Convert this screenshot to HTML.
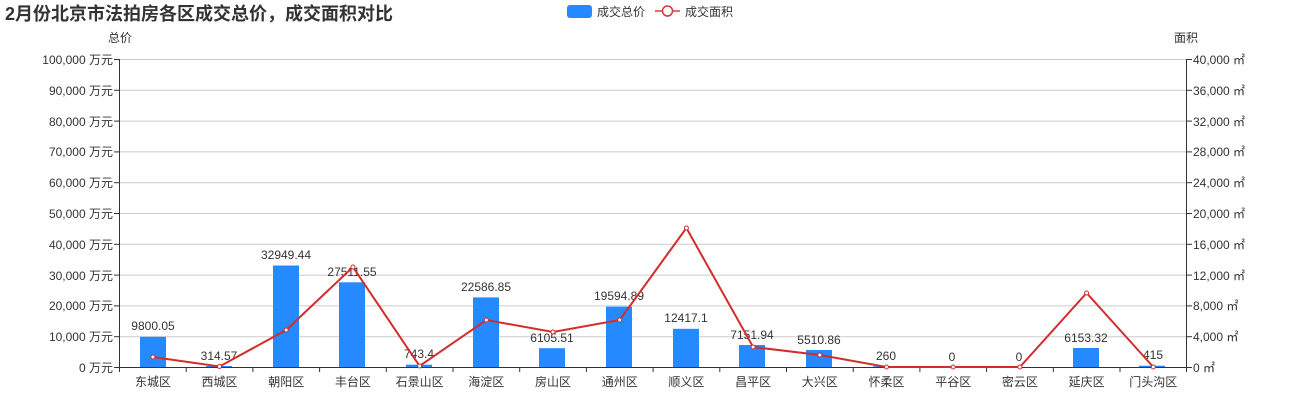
<!DOCTYPE html>
<html><head><meta charset="utf-8"><style>
html,body{margin:0;padding:0;background:#fff;}
svg{display:block;font-family:"Liberation Sans","Noto Sans CJK SC",sans-serif;}
</style></head><body>
<svg width="1300" height="400" viewBox="0 0 1300 400">
<text x="5" y="20" font-size="18" font-weight="bold" fill="#333">2月份北京市法拍房各区成交总价，成交面积对比</text>
<!-- legend -->
<rect x="567" y="5" width="25" height="13" rx="3" fill="#2589ff"/>
<text x="597" y="16" font-size="12" fill="#333">成交总价</text>
<line x1="655" y1="11" x2="680" y2="11" stroke="#e07070" stroke-width="2"/>
<circle cx="667.5" cy="11" r="5" fill="#fff" stroke="#d43a3a" stroke-width="1.5"/>
<text x="685" y="16" font-size="12" fill="#333">成交面积</text>
<text x="108" y="42" font-size="12" fill="#333">总价</text>
<text x="1174" y="42" font-size="12" fill="#333">面积</text>
<!-- grid -->
<g stroke="#ccc" stroke-width="1">
<line x1="119" y1="59.5" x2="1186" y2="59.5"/>
<line x1="119" y1="90.3" x2="1186" y2="90.3"/>
<line x1="119" y1="121.1" x2="1186" y2="121.1"/>
<line x1="119" y1="151.9" x2="1186" y2="151.9"/>
<line x1="119" y1="182.7" x2="1186" y2="182.7"/>
<line x1="119" y1="213.5" x2="1186" y2="213.5"/>
<line x1="119" y1="244.3" x2="1186" y2="244.3"/>
<line x1="119" y1="275.1" x2="1186" y2="275.1"/>
<line x1="119" y1="305.9" x2="1186" y2="305.9"/>
<line x1="119" y1="336.7" x2="1186" y2="336.7"/>
</g>
<!-- left axis labels -->
<g font-size="12" fill="#333" text-anchor="end">
<text x="113" y="64">100,000 万元</text>
<text x="113" y="95">90,000 万元</text>
<text x="113" y="126">80,000 万元</text>
<text x="113" y="156">70,000 万元</text>
<text x="113" y="187">60,000 万元</text>
<text x="113" y="218">50,000 万元</text>
<text x="113" y="249">40,000 万元</text>
<text x="113" y="280">30,000 万元</text>
<text x="113" y="310">20,000 万元</text>
<text x="113" y="341">10,000 万元</text>
<text x="113" y="372">0 万元</text>
</g>
<g font-size="12" fill="#333">
<text x="1193" y="64">40,000 ㎡</text>
<text x="1193" y="95">36,000 ㎡</text>
<text x="1193" y="126">32,000 ㎡</text>
<text x="1193" y="156">28,000 ㎡</text>
<text x="1193" y="187">24,000 ㎡</text>
<text x="1193" y="218">20,000 ㎡</text>
<text x="1193" y="249">16,000 ㎡</text>
<text x="1193" y="280">12,000 ㎡</text>
<text x="1193" y="310">8,000 ㎡</text>
<text x="1193" y="341">4,000 ㎡</text>
<text x="1193" y="372">0 ㎡</text>
</g>
<!-- axes -->
<g stroke="#333" stroke-width="1">
<line x1="119.5" y1="59" x2="119.5" y2="367"/>
<line x1="1186.5" y1="59" x2="1186.5" y2="367"/>
<line x1="119" y1="367.5" x2="1187" y2="367.5"/>
<line x1="114" y1="59.5" x2="119" y2="59.5"/><line x1="114" y1="90.3" x2="119" y2="90.3"/><line x1="114" y1="121.1" x2="119" y2="121.1"/><line x1="114" y1="151.9" x2="119" y2="151.9"/><line x1="114" y1="182.7" x2="119" y2="182.7"/><line x1="114" y1="213.5" x2="119" y2="213.5"/><line x1="114" y1="244.3" x2="119" y2="244.3"/><line x1="114" y1="275.1" x2="119" y2="275.1"/><line x1="114" y1="305.9" x2="119" y2="305.9"/><line x1="114" y1="336.7" x2="119" y2="336.7"/><line x1="114" y1="367.5" x2="119" y2="367.5"/>
<line x1="1187" y1="59.5" x2="1192" y2="59.5"/><line x1="1187" y1="90.3" x2="1192" y2="90.3"/><line x1="1187" y1="121.1" x2="1192" y2="121.1"/><line x1="1187" y1="151.9" x2="1192" y2="151.9"/><line x1="1187" y1="182.7" x2="1192" y2="182.7"/><line x1="1187" y1="213.5" x2="1192" y2="213.5"/><line x1="1187" y1="244.3" x2="1192" y2="244.3"/><line x1="1187" y1="275.1" x2="1192" y2="275.1"/><line x1="1187" y1="305.9" x2="1192" y2="305.9"/><line x1="1187" y1="336.7" x2="1192" y2="336.7"/><line x1="1187" y1="367.5" x2="1192" y2="367.5"/>
<line x1="119.5" y1="367" x2="119.5" y2="372"/><line x1="186.2" y1="367" x2="186.2" y2="372"/><line x1="252.9" y1="367" x2="252.9" y2="372"/><line x1="319.6" y1="367" x2="319.6" y2="372"/><line x1="386.3" y1="367" x2="386.3" y2="372"/><line x1="453" y1="367" x2="453" y2="372"/><line x1="519.7" y1="367" x2="519.7" y2="372"/><line x1="586.4" y1="367" x2="586.4" y2="372"/><line x1="653.1" y1="367" x2="653.1" y2="372"/><line x1="719.8" y1="367" x2="719.8" y2="372"/><line x1="786.5" y1="367" x2="786.5" y2="372"/><line x1="853.2" y1="367" x2="853.2" y2="372"/><line x1="919.9" y1="367" x2="919.9" y2="372"/><line x1="986.6" y1="367" x2="986.6" y2="372"/><line x1="1053.3" y1="367" x2="1053.3" y2="372"/><line x1="1120" y1="367" x2="1120" y2="372"/><line x1="1186.5" y1="367" x2="1186.5" y2="372"/>
</g>
<!-- bars -->
<g fill="#2589ff">
<rect x="140" y="336.8" width="26" height="30.2"/>
<rect x="206" y="366" width="26" height="1"/>
<rect x="273" y="265.5" width="26" height="101.5"/>
<rect x="339" y="282.3" width="26" height="84.7"/>
<rect x="406" y="364.7" width="26" height="2.3"/>
<rect x="473" y="297.4" width="26" height="69.6"/>
<rect x="539" y="348.2" width="26" height="18.8"/>
<rect x="606" y="306.6" width="26" height="60.4"/>
<rect x="673" y="328.8" width="26" height="38.2"/>
<rect x="739" y="345" width="26" height="22"/>
<rect x="806" y="350" width="26" height="17"/>
<rect x="873" y="366.2" width="26" height="0.8"/>
<rect x="1073" y="348" width="26" height="19"/>
<rect x="1139" y="365.7" width="26" height="1.3"/>
</g>
<!-- bar labels -->
<g font-size="12" fill="#333" text-anchor="middle">
<text x="153" y="330">9800.05</text>
<text x="219" y="360">314.57</text>
<text x="286" y="259">32949.44</text>
<text x="352" y="276">27511.55</text>
<text x="419" y="358">743.4</text>
<text x="486" y="291">22586.85</text>
<text x="552" y="342">6105.51</text>
<text x="619" y="300">19594.89</text>
<text x="686" y="322">12417.1</text>
<text x="752" y="339">7151.94</text>
<text x="819" y="344">5510.86</text>
<text x="886" y="360">260</text>
<text x="952" y="361">0</text>
<text x="1019" y="361">0</text>
<text x="1086" y="342">6153.32</text>
<text x="1153" y="359">415</text>
</g>
<!-- line -->
<polyline fill="none" stroke="#d42b2b" stroke-width="2" points="152.9,357 219.5,366.5 286.2,330 352.9,267 419.6,366 486.3,320 553,332 619.7,320 686.4,228 753.1,347 819.8,355 886.5,367 953.2,367 1019.9,367 1086.6,293 1153.3,367"/>
<g fill="#fff" stroke="#d42b2b" stroke-width="1">
<circle cx="152.9" cy="357" r="2"/><circle cx="219.5" cy="366.5" r="2"/><circle cx="286.2" cy="330" r="2"/><circle cx="352.9" cy="267" r="2"/><circle cx="419.6" cy="366" r="2"/><circle cx="486.3" cy="320" r="2"/><circle cx="553" cy="332" r="2"/><circle cx="619.7" cy="320" r="2"/><circle cx="686.4" cy="228" r="2"/><circle cx="753.1" cy="347" r="2"/><circle cx="819.8" cy="355" r="2"/><circle cx="886.5" cy="367" r="2"/><circle cx="953.2" cy="367" r="2"/><circle cx="1019.9" cy="367" r="2"/><circle cx="1086.6" cy="293" r="2"/><circle cx="1153.3" cy="367" r="2"/>
</g>
<!-- x labels -->
<g font-size="12" fill="#333" text-anchor="middle">
<text x="153" y="386">东城区</text><text x="219.5" y="386">西城区</text><text x="286.2" y="386">朝阳区</text><text x="352.9" y="386">丰台区</text><text x="419.6" y="386">石景山区</text><text x="486.3" y="386">海淀区</text><text x="553" y="386">房山区</text><text x="619.7" y="386">通州区</text><text x="686.4" y="386">顺义区</text><text x="753.1" y="386">昌平区</text><text x="819.8" y="386">大兴区</text><text x="886.5" y="386">怀柔区</text><text x="953.2" y="386">平谷区</text><text x="1019.9" y="386">密云区</text><text x="1086.6" y="386">延庆区</text><text x="1153.3" y="386">门头沟区</text>
</g>
</svg>
</body></html>
